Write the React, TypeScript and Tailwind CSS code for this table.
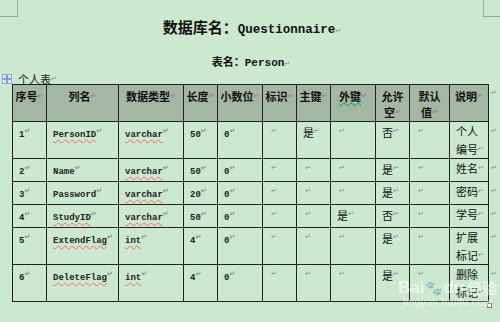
import React from "react";
import { Move } from "lucide-react";

type Row = {
  n: string;
  name: string;
  nameWavy: boolean;
  type: string;
  len: string;
  dec: string;
  pk: string;
  fk: string;
  nul: string;
  desc: string[];
};

const rows: Row[] = [
  { n: "1", name: "PersonID", nameWavy: true, type: "varchar", len: "50", dec: "0", pk: "是", fk: "", nul: "否", desc: ["个人", "编号"] },
  { n: "2", name: "Name", nameWavy: false, type: "varchar", len: "50", dec: "0", pk: "", fk: "", nul: "是", desc: ["姓名"] },
  { n: "3", name: "Password", nameWavy: false, type: "varchar", len: "20", dec: "0", pk: "", fk: "", nul: "是", desc: ["密码"] },
  { n: "4", name: "StudyID", nameWavy: true, type: "varchar", len: "50", dec: "0", pk: "", fk: "是", nul: "否", desc: ["学号"] },
  { n: "5", name: "ExtendFlag", nameWavy: true, type: "int", len: "4", dec: "0", pk: "", fk: "", nul: "是", desc: ["扩展", "标记"] },
  { n: "6", name: "DeleteFlag", nameWavy: true, type: "int", len: "4", dec: "0", pk: "", fk: "", nul: "是", desc: ["删除", "标记"] },
];

const widths = [34, 72, 65, 34, 45, 34, 34, 45, 34, 40, 39];

function Mark() {
  return (
    <span className="text-[7px] text-[#8a8a8a] font-['DejaVu_Sans'] align-top">↵</span>
  );
}

const mono = "font-['Liberation_Mono',monospace] font-bold text-[9px] text-[#222]";
const cjk = "font-['Noto_Sans_CJK_SC','Noto_Sans',sans-serif] text-[11px] text-[#111]";

function Head({ lines, wavy }: { lines: string[]; wavy?: boolean }) {
  return (
    <th className="border border-[#222] align-top text-center font-bold px-0 pt-[3px] leading-[16px] bg-[repeating-conic-gradient(#7f8c7f_0_25%,#c9dfc9_0_50%)] bg-[length:2px_2px]">
      {lines.map((l, i) => (
        <div key={i} className={cjk + " font-bold"}>
          <span className={wavy ? "underline decoration-wavy decoration-green-600 decoration-1" : ""}>{l}</span>
          {i === lines.length - 1 && <Mark />}
        </div>
      ))}
    </th>
  );
}

function Mono({ text, wavy }: { text: string; wavy?: boolean }) {
  return (
    <span className={mono}>
      <span className={wavy ? "underline decoration-wavy decoration-red-400 decoration-1 underline-offset-2" : ""}>{text}</span>
      <Mark />
    </span>
  );
}

function Cell({ children }: { children?: React.ReactNode }) {
  return (
    <td className="border border-[#222] align-top text-left pl-[6px] py-0 leading-[18px]">
      {children ?? <span className="pl-[2px]"><Mark /></span>}
    </td>
  );
}

function Cn({ text }: { text: string }) {
  return (
    <span className={cjk}>
      {text}
      <Mark />
    </span>
  );
}

export default function App() {
  return (
    <div className="relative w-[500px] h-[322px] overflow-hidden bg-[#cce8cf] text-[#111]">
      <div className="flex justify-between">
        <div className="w-[18px] h-[17px] border-r border-b border-[#9aa79a]" />
        <div className="w-[17px] h-[17px] border-l border-b border-[#9aa79a]" />
      </div>

      <div className="flex justify-center items-baseline mt-[1px] ml-[4px] h-[18px]">
        <span className="font-['Noto_Sans_CJK_SC',sans-serif] font-bold text-[15px] leading-[18px]">数据库名：</span>
        <span className="font-['Liberation_Mono',monospace] font-bold text-[12.5px] leading-[18px]">Questionnaire</span>
        <Mark />
      </div>

      <div className="flex justify-center items-baseline mt-[17px] ml-[2px] h-[16px]">
        <span className="font-['Noto_Sans_CJK_SC',sans-serif] font-bold text-[11px] leading-[16px]">表名：</span>
        <span className="font-['Liberation_Mono',monospace] font-bold text-[11px] leading-[16px]">Person</span>
        <Mark />
      </div>

      <div className="flex items-center h-[14px] mt-[3px]">
        <div className="ml-[2px] w-[10px] h-[10px] border border-[#8aa4d6] bg-[#eef2fb] flex items-center justify-center">
          <Move size={8} strokeWidth={2.5} className="text-[#2b5fc7]" />
        </div>
        <span className="ml-[6px] font-['Noto_Sans_CJK_SC',sans-serif] text-[11px] text-[#222] leading-[14px]">个人表</span>
        <Mark />
      </div>

      <div className="ml-[12px] mt-[-2px]">
        <table className="border-collapse table-fixed">
          <colgroup>
            {widths.map((w, i) => (
              <col key={i} style={{ width: w }} />
            ))}
            <col style={{ width: 10 }} />
          </colgroup>
          <thead>
            <tr className="h-[37px]">
              <Head lines={["序号"]} />
              <Head lines={["列名"]} />
              <Head lines={["数据类型"]} />
              <Head lines={["长度"]} />
              <Head lines={["小数位"]} />
              <Head lines={["标识"]} />
              <Head lines={["主键"]} />
              <Head lines={["外键"]} wavy />
              <Head lines={["允许", "空"]} />
              <Head lines={["默认", "值"]} />
              <Head lines={["说明"]} />
              <td className="align-top pl-[2px] pt-[3px]"><Mark /></td>
            </tr>
          </thead>
          <tbody>
            {rows.map((r) => (
              <tr key={r.n} className={r.desc.length > 1 ? "h-[37px]" : "h-[19px]"}>
                <Cell><Mono text={r.n} /></Cell>
                <Cell><Mono text={r.name} wavy={r.nameWavy} /></Cell>
                <Cell><Mono text={r.type} wavy /></Cell>
                <Cell><Mono text={r.len} /></Cell>
                <Cell><Mono text={r.dec} /></Cell>
                <Cell />
                <Cell>{r.pk ? <Cn text={r.pk} /> : undefined}</Cell>
                <Cell>{r.fk ? <Cn text={r.fk} /> : undefined}</Cell>
                <Cell><Cn text={r.nul} /></Cell>
                <Cell />
                <td className="border border-[#222] align-top text-left pl-[6px] py-0 leading-[18px]">
                  {r.desc.map((d, i) => (
                    <div key={i} className={cjk}>
                      {d}
                      {i === r.desc.length - 1 && <Mark />}
                    </div>
                  ))}
                </td>
                <td className="align-top pl-[2px] py-0 leading-[18px]"><Mark /></td>
              </tr>
            ))}
          </tbody>
        </table>
        <div className="ml-[475px] mt-px w-[5px] h-[5px] border border-[#777] bg-white" />
      </div>

      <div className="absolute left-[398px] top-[279px] flex flex-col items-center text-white/60 pointer-events-none">
        <div className="flex items-center font-['Liberation_Sans',sans-serif] font-bold text-[17px] leading-[18px]">
          <span>Bai</span>
          <span className="mx-[1px] text-[14px] opacity-60">🐾</span>
          <span>du</span>
          <span className="ml-[3px] font-['Noto_Sans_CJK_SC',sans-serif] text-[15px]">经验</span>
        </div>
        <span className="font-['Liberation_Sans',sans-serif] text-[10px] leading-[12px] tracking-[0.5px]">jingyan.baidu.com</span>
      </div>
    </div>
  );
}
